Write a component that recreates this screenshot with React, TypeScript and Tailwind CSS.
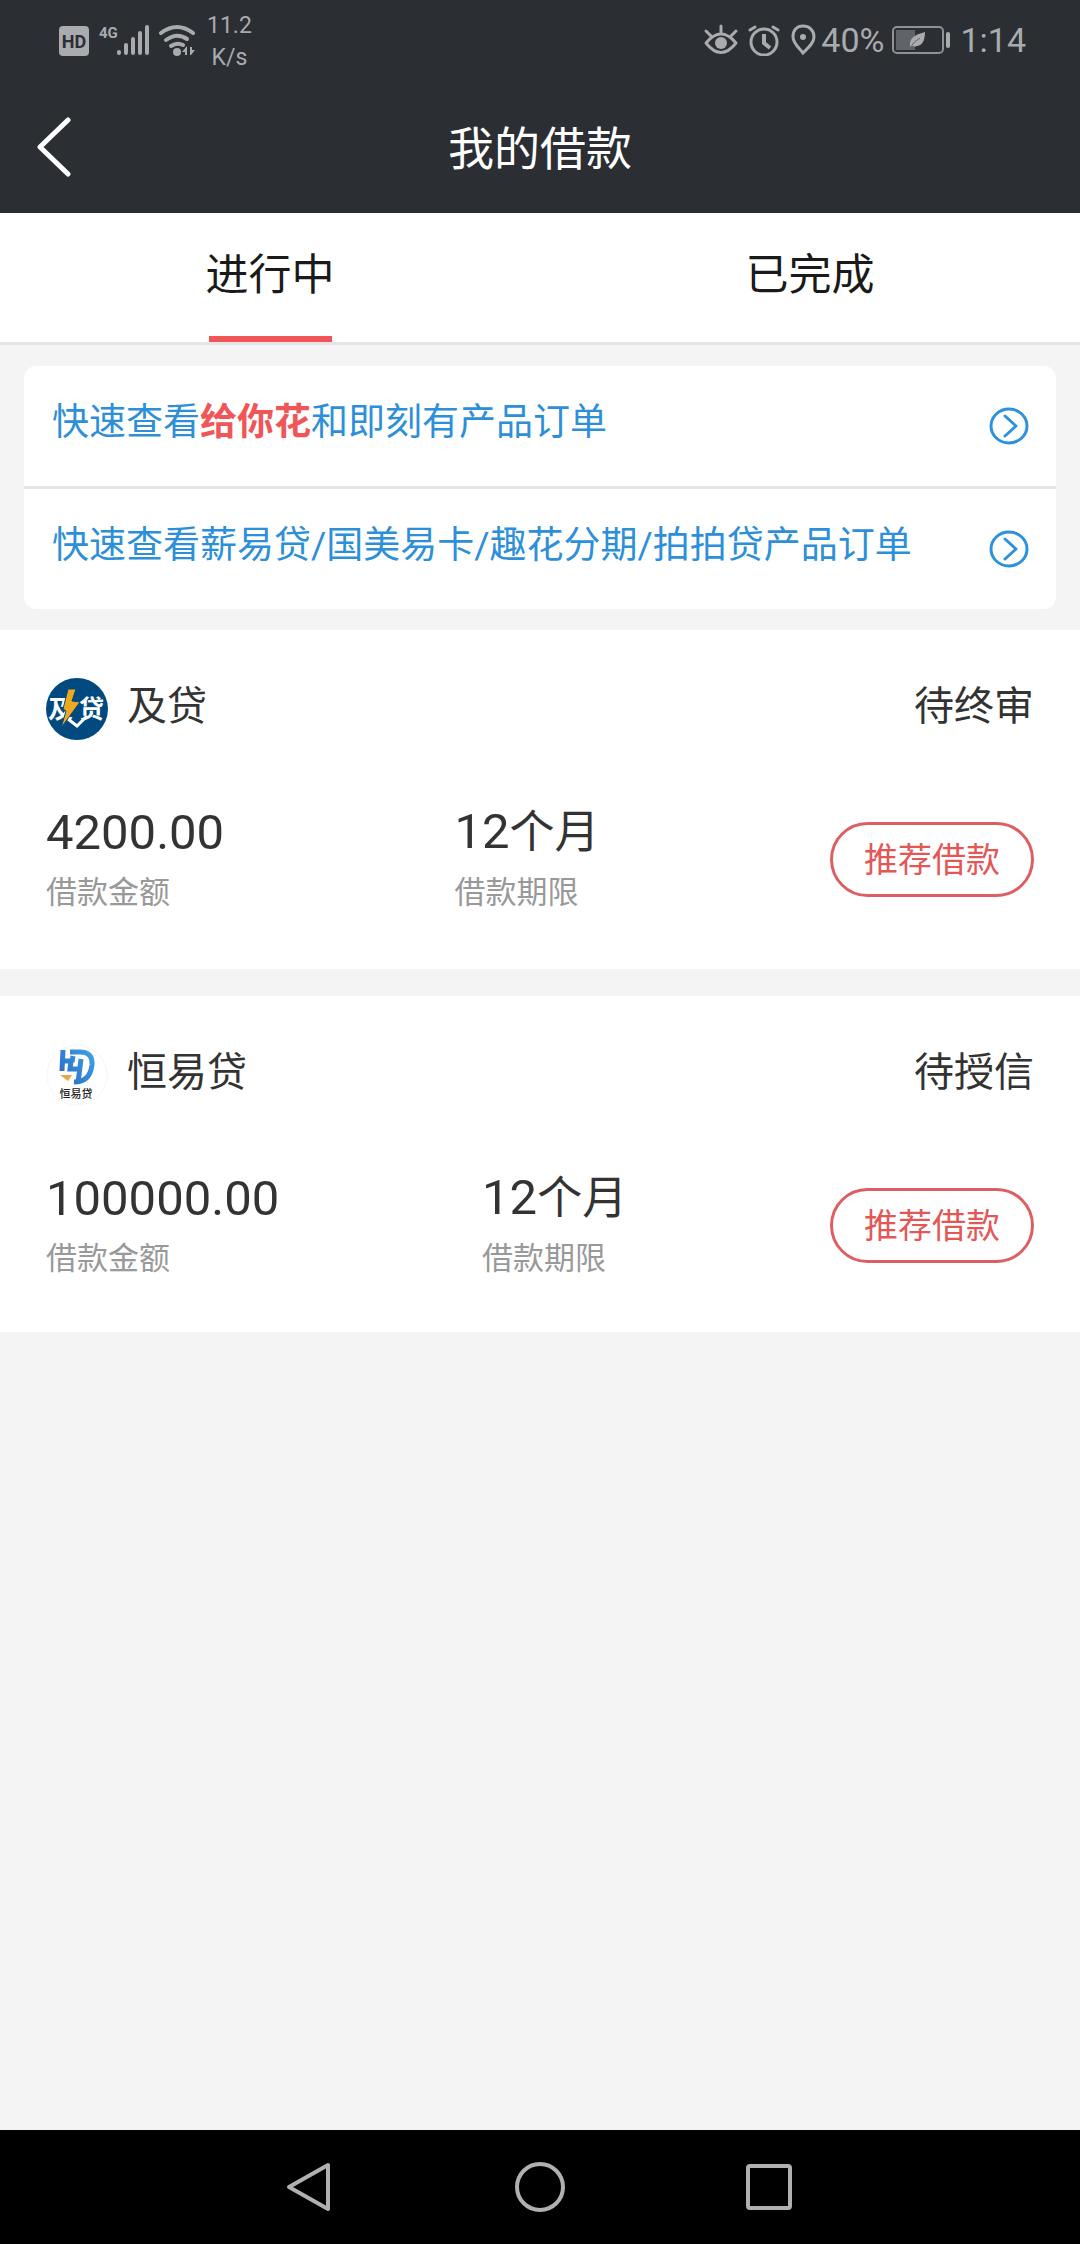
import React, { useState } from "react";

const tabs = ["进行中", "已完成"];

type Loan = {
  name: string;
  status: string;
  amount: string;
  months: string;
  logo: React.ReactNode;
};

function JidaiLogo() {
  return (
    <svg width="62" height="62" viewBox="0 0 62 62" aria-hidden="true">
      <circle cx="31" cy="31" r="31" fill="#004a80" />
      <g fill="#fff" fontFamily='"Noto Sans CJK SC", sans-serif' fontWeight="700" fontSize="25">
        <text x="2" y="40">及</text>
        <text x="33" y="40">贷</text>
      </g>
      <path d="M22 41 L31 48 L41 38" fill="none" stroke="#fff" strokeWidth="3" />
      <path d="M22 11 H30 L26 23 L34 24 L15 50 L20 33 L17 31 Z" fill="#f0a91c" stroke="#004a80" strokeWidth="1" />
    </svg>
  );
}

function HengyidaiLogo() {
  return (
    <svg width="62" height="62" viewBox="0 0 62 62" aria-hidden="true">
      <defs>
        <linearGradient id="hyd" x1="0" y1="40" x2="46" y2="6" gradientUnits="userSpaceOnUse">
          <stop offset="0" stopColor="#2458b8" />
          <stop offset="1" stopColor="#3fa2e6" />
        </linearGradient>
      </defs>
      <circle cx="31" cy="31" r="30" fill="#fff" stroke="#f6f6f6" strokeWidth="1" />
      <g fill="none" stroke="url(#hyd)">
        <path d="M17 6 L16 27 M16 17 H25 L24 25 H34 M27 12 L26 18 M35 15 L32 39" strokeWidth="5" />
        <path d="M24 8 H34 Q47 8 46 21 Q44 38 28 38" strokeWidth="5" />
      </g>
      <path d="M14 31 H26 L22 37 Z" fill="#eda54c" />
      <text x="30" y="54" textAnchor="middle" fill="#222" fontFamily='"Noto Sans CJK SC", sans-serif' fontWeight="500" fontSize="11">
        恒易贷
      </text>
    </svg>
  );
}

const loans: Loan[] = [
  { name: "及贷", status: "待终审", amount: "4200.00", months: "12", logo: <JidaiLogo /> },
  { name: "恒易贷", status: "待授信", amount: "100000.00", months: "12", logo: <HengyidaiLogo /> },
];

function StatusBar() {
  return (
    <div className="flex h-20 items-center justify-between pr-[54px] pl-[59px] text-[#a9abae]">
      <div className="flex items-center">
        <svg width="140" height="32" viewBox="0 0 140 32" aria-hidden="true">
          <rect x="0" y="2" width="30" height="30" rx="4" fill="#a9abae" />
          <text x="15" y="24" textAnchor="middle" fontFamily="Roboto, sans-serif" fontWeight="700" fontSize="18" fill="#2b2e33">HD</text>
          <text x="40" y="14" fontFamily="Roboto, sans-serif" fontWeight="700" fontSize="15" fill="#a9abae">4G</text>
          <g stroke="#a9abae" strokeWidth="4" strokeLinecap="round">
            <path d="M60 28 V29 M67 21 V29 M74 15 V29 M81 9 V29 M88 3 V29" />
          </g>
          <g fill="none" stroke="#a9abae" strokeWidth="4" strokeLinecap="round">
            <path d="M102 9 Q118 -3 134 9" />
            <path d="M107 16 Q118 8 128 15" />
            <path d="M112 22 Q118 18 124 21" />
          </g>
          <circle cx="118" cy="28" r="4" fill="#a9abae" />
          <path d="M123 28 L128 22 V31 H126 V28 Z M131 23 H133 V26 H136 L132 31 H131 Z" fill="#a9abae" />
        </svg>
        <div className="ml-2 flex flex-col items-center pt-1 text-[23px] leading-[32px]">
          <span>11.2</span>
          <span>K/s</span>
        </div>
      </div>
      <div className="flex items-center text-[34px] leading-[40px]">
        <svg width="114" height="32" viewBox="0 0 114 32" fill="none" stroke="#a9abae" strokeWidth="3" aria-hidden="true">
          <path d="M3 19 Q18 1 33 19 Q18 38 3 19 Z" strokeLinejoin="round" />
          <circle cx="18" cy="19" r="6" fill="#a9abae" stroke="none" />
          <path d="M18 9 V2 M8 12 L3 7 M28 12 L33 7" strokeLinecap="round" />
          <circle cx="61" cy="18" r="13" />
          <path d="M61 10 V19 L67 24" strokeWidth="4" />
          <path d="M47 6 L52 3 M75 6 L70 3" strokeWidth="3" strokeLinecap="round" />
          <path d="M100 29 C96 24 90 19 90 13 C90 6 94 2 100 2 C106 2 111 6 111 13 C111 19 105 24 100 29 Z" />
          <circle cx="100" cy="13" r="3" fill="#a9abae" stroke="none" />
        </svg>
        <span className="ml-1">40%</span>
        <svg className="mx-2" width="60" height="28" viewBox="0 0 60 28" aria-hidden="true">
          <rect x="1" y="1" width="50" height="26" rx="4" fill="none" stroke="#8f9194" strokeWidth="2" />
          <rect x="4" y="4" width="19" height="20" fill="#606367" />
          <path d="M18 21 C17 12 22 9 33 6 C33 16 29 22 20 20 Z" fill="#a9abae" />
          <path d="M18 22 Q22 15 28 12" stroke="#606367" strokeWidth="1" fill="none" />
          <rect x="54" y="6" width="4" height="16" rx="2" fill="#a9abae" />
        </svg>
        <span>1:14</span>
      </div>
    </div>
  );
}

function CircleArrow() {
  return (
    <svg className="shrink-0" width="40" height="38" viewBox="0 0 40 38" fill="none" stroke="#2e91dd" aria-hidden="true">
      <ellipse cx="20" cy="19" rx="18" ry="17" strokeWidth="3" />
      <path d="M16 9 L27 19 L16 29" strokeWidth="3" strokeLinecap="round" strokeLinejoin="round" />
    </svg>
  );
}

function LinkRow({ children }: { children: React.ReactNode }) {
  return (
    <a href="#" className="box-content flex h-[120px] items-center justify-between pr-[27px] pl-7 text-[37px] text-[#2e8fd9]">
      <span className="pb-1.5 leading-[48px]">{children}</span>
      <CircleArrow />
    </a>
  );
}

function LoanCard({ loan }: { loan: Loan }) {
  return (
    <section className="bg-white px-[46px] pt-12 pb-[46px] text-[#333] last:pb-[43px]">
      <div className="flex items-center justify-between text-[40px] leading-[54px]">
        <div className="flex items-center gap-[19px]">
          {loan.logo}
          <h2 className="pb-1">{loan.name}</h2>
        </div>
        <span className="pb-1">{loan.status}</span>
      </div>
      <div className="mt-[62px] flex items-center justify-between">
        <dl className="flex flex-col">
          <dd className="text-[49px] leading-[60px]">{loan.amount}</dd>
          <dt className="text-[31px] leading-[60px] text-[#999]">借款金额</dt>
        </dl>
        <dl className="flex flex-col">
          <dd className="text-[49px] leading-[60px]">
            {loan.months}
            <span className="text-[45px]">个月</span>
          </dd>
          <dt className="text-[31px] leading-[60px] text-[#999]">借款期限</dt>
        </dl>
        <button type="button" className="mb-1.5 h-[75px] w-[204px] rounded-full border-3 border-[#dd5f63] text-[34px] leading-[48px] text-[#e35757]">
          推荐借款
        </button>
      </div>
    </section>
  );
}

export default function App() {
  const [active, setActive] = useState(0);
  return (
    <div className="flex min-h-screen flex-col bg-[#f4f4f4] font-[Roboto,'Noto_Sans_CJK_SC',sans-serif]">
      <header className="bg-[#2b2e33]">
        <StatusBar />
        <div className="grid h-[133px] grid-cols-[1fr_auto_1fr] items-center text-white">
          <button type="button" aria-label="返回" className="ml-9 w-9">
            <svg width="36" height="60" viewBox="0 0 36 60" fill="none" stroke="#fff" strokeWidth="5" strokeLinecap="round" strokeLinejoin="round">
              <path d="M32 3 L4 30 L32 57" />
            </svg>
          </button>
          <h1 className="pt-1 text-[46px] leading-[60px]">我的借款</h1>
        </div>
      </header>

      <nav role="tablist" className="grid h-[132px] grid-cols-2 border-b-3 border-[#e5e5e5] bg-white">
        {tabs.map((tab, i) => (
          <button
            key={tab}
            type="button"
            role="tab"
            aria-selected={i === active}
            onClick={() => setActive(i)}
            className="flex flex-col items-center justify-between pt-8 text-[43px] leading-[60px] text-[#1a1a1a]"
          >
            {tab}
            <span className={i === active ? "h-[6px] w-[123px] bg-[#f25558]" : "h-[6px]"} />
          </button>
        ))}
      </nav>

      <main className="flex-1">
        <div className="mx-6 my-[21px] divide-y-3 divide-[#e5e5e5] rounded-xl bg-white">
          <LinkRow>
            快速查看<b className="text-[#f05557]">给你花</b>和即刻有产品订单
          </LinkRow>
          <LinkRow>快速查看薪易贷/国美易卡/趣花分期/拍拍贷产品订单</LinkRow>
        </div>
        <div className="flex flex-col gap-[27px]">
          {loans.map((loan) => (
            <LoanCard key={loan.name} loan={loan} />
          ))}
        </div>
      </main>

      <nav className="flex h-[114px] items-center justify-center gap-[180px] bg-black">
        <button type="button" aria-label="后退" className="h-[50px] w-[50px]">
          <svg width="50" height="50" viewBox="0 0 50 50" fill="none" stroke="#b0b0b0" strokeWidth="4" strokeLinejoin="round">
            <path d="M43 3 L4 25 L43 47 Z" />
          </svg>
        </button>
        <button type="button" aria-label="主页" className="h-[50px] w-[50px]">
          <svg width="50" height="50" viewBox="0 0 50 50" fill="none" stroke="#b0b0b0" strokeWidth="4">
            <circle cx="25" cy="25" r="23" />
          </svg>
        </button>
        <button type="button" aria-label="最近任务" className="h-[50px] w-[50px]">
          <svg width="50" height="50" viewBox="0 0 50 50" fill="none" stroke="#b0b0b0" strokeWidth="4">
            <rect x="3" y="4" width="42" height="42" rx="2" />
          </svg>
        </button>
      </nav>
    </div>
  );
}
